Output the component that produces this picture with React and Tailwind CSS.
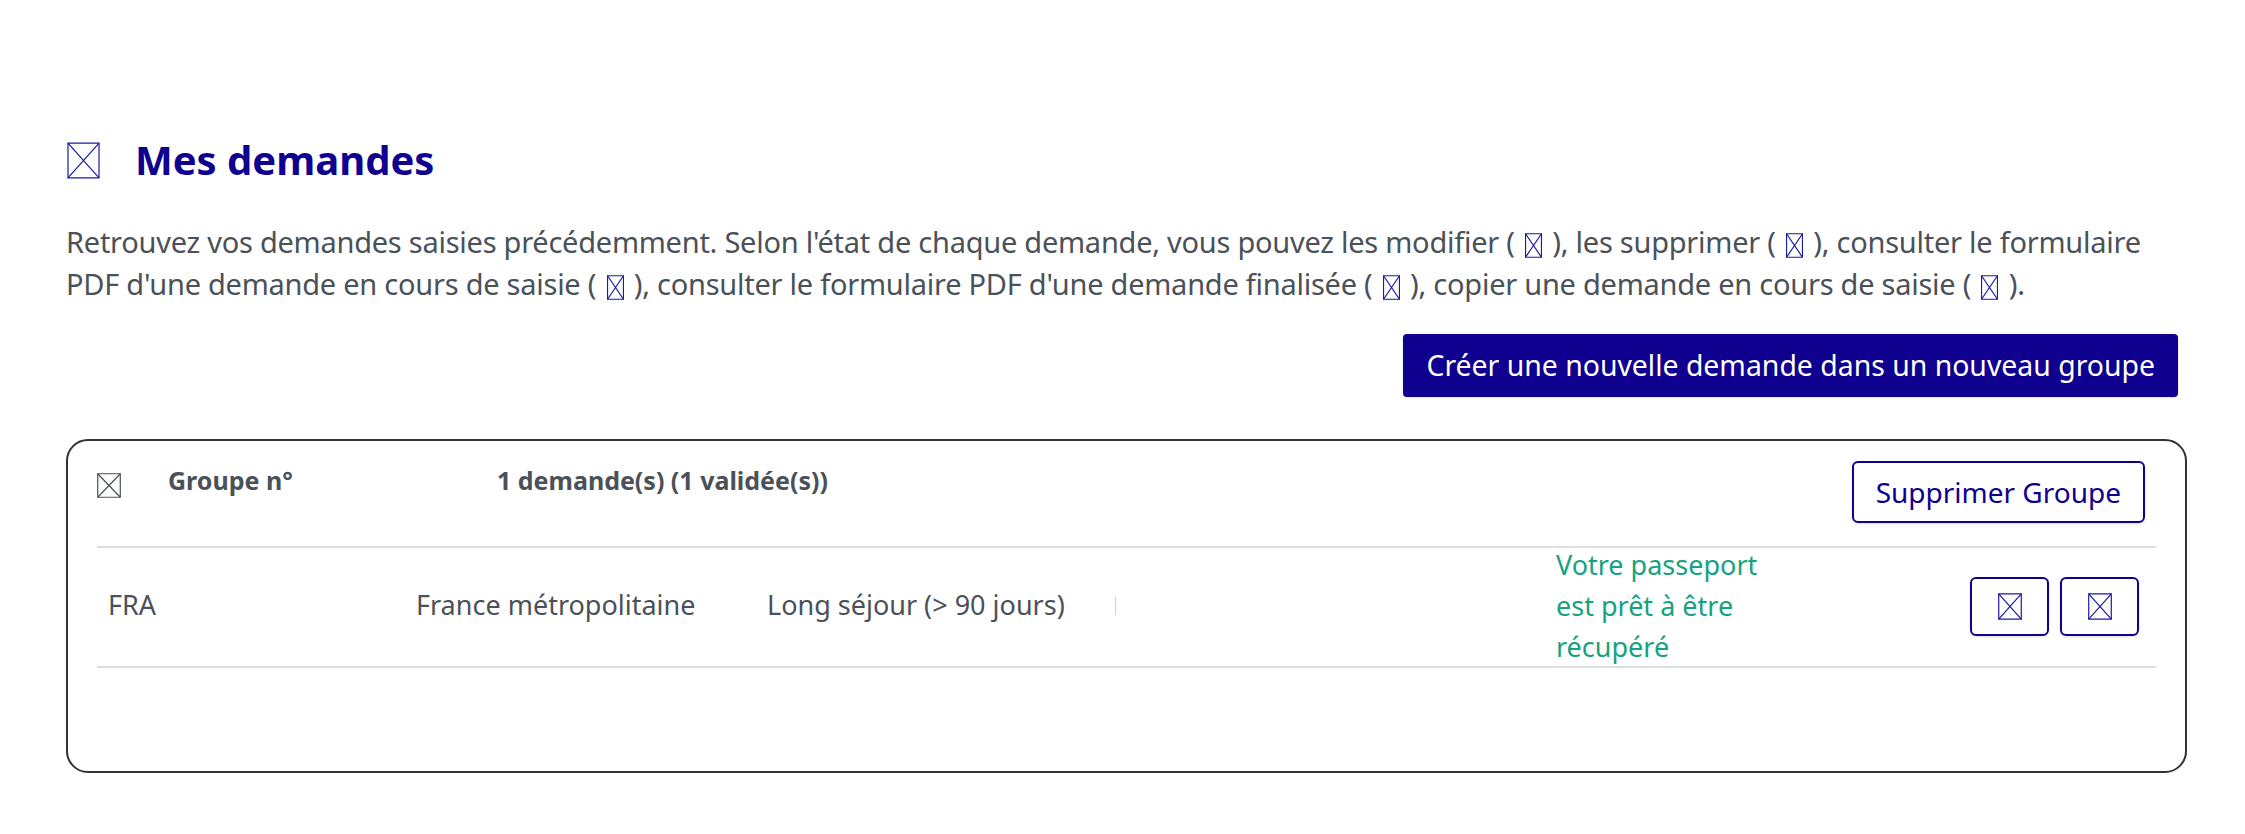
import React from "react";

const Tofu = ({ className = "" }) => (
  <svg viewBox="0 0 20 20" preserveAspectRatio="none" className={className} fill="none" stroke="currentColor" strokeWidth="1.2">
    <rect x="0.6" y="0.6" width="18.8" height="18.8" vectorEffect="non-scaling-stroke" />
    <path d="M0.6 0.6 L19.4 19.4 M19.4 0.6 L0.6 19.4" vectorEffect="non-scaling-stroke" />
  </svg>
);

const InlineTofu = () => (
  <span className="inline-flex items-center text-[#1a1aa6] align-middle mx-[3px]">
    <Tofu className="w-[17px] h-[25px]" />
  </span>
);

const App = () => {
  return (
    <div className="min-h-[834px] bg-white pl-[66px] pr-[58px] pt-[139px] text-[#4b5158]" style={{ fontFamily: "'Noto Sans', 'Open Sans', sans-serif" }}>
      <div className="flex items-center h-[42px]">
        <span className="text-[#1a1aa6] ml-[1px]">
          <Tofu className="w-[33px] h-[37px]" />
        </span>
        <h1 className="ml-[35px] text-[40px] leading-none font-bold text-[#0f0090]">Mes demandes</h1>
      </div>

      <p className="mt-[40px] text-[29px] tracking-[-0.25px] leading-[42px]">
        Retrouvez vos demandes saisies précédemment. Selon l'état de chaque demande, vous pouvez les modifier ( <InlineTofu /> ), les supprimer ( <InlineTofu /> ), consulter le formulaire PDF d'une demande en cours de saisie ( <InlineTofu /> ), consulter le formulaire PDF d'une demande finalisée ( <InlineTofu /> ), copier une demande en cours de saisie ( <InlineTofu /> ).
      </p>

      <div className="flex justify-end mt-[29px] pr-[9px]">
        <button className="h-[63px] px-[23px] bg-[#10008f] text-white text-[28.4px] rounded-[4px] shadow-sm">
          Créer une nouvelle demande dans un nouveau groupe
        </button>
      </div>

      <div className="mt-[42px] border-2 border-[#333333] rounded-[22px] h-[334px] px-[29px] pt-[20px]">
        <div className="flex items-start h-[87px] border-b-2 border-[#dedede]">
          <div className="pt-[12px] text-[#4b5158]">
            <Tofu className="w-[24px] h-[25px]" />
          </div>
          <div className="ml-[47px] w-[329px] pt-[1px] text-[25px] font-bold">Groupe n°</div>
          <div className="pt-[1px] text-[25px] font-bold">1 demande(s) (1 validée(s))</div>
          <div className="flex-1" />
          <button className="h-[62px] px-[22px] border-2 border-[#10008f] rounded-[6px] text-[#10008f] text-[28px] shadow-sm mr-[11px]">
            Supprimer Groupe
          </button>
        </div>

        <div className="flex items-center h-[120px] border-b-2 border-[#dedede] text-[27px]">
          <div className="pl-[11px] w-[319px] -mt-[3px]">FRA</div>
          <div className="w-[351px] -mt-[3px]">France métropolitaine</div>
          <div className="w-[349px] flex items-center -mt-[3px]">
            <span>Long séjour (&gt; 90 jours)</span>
            <span className="ml-auto w-[1px] h-[18px] bg-[#d0d0d0]" />
          </div>
          <div className="ml-[440px] w-[215px] text-[#15a37f] leading-[41px] -mt-[4px]">
            Votre passeport est prêt à être récupéré
          </div>
          <div className="flex-1" />
          <div className="flex gap-[11px] mr-[17px] -mt-[2px]">
            <button className="w-[79px] h-[59px] flex items-center justify-center border-2 border-[#10008f] rounded-[6px] text-[#1a1aa6] shadow-sm">
              <Tofu className="w-[24px] h-[27px]" />
            </button>
            <button className="w-[79px] h-[59px] flex items-center justify-center border-2 border-[#10008f] rounded-[6px] text-[#1a1aa6] shadow-sm">
              <Tofu className="w-[24px] h-[27px]" />
            </button>
          </div>
        </div>
      </div>
    </div>
  );
};

export default App;
